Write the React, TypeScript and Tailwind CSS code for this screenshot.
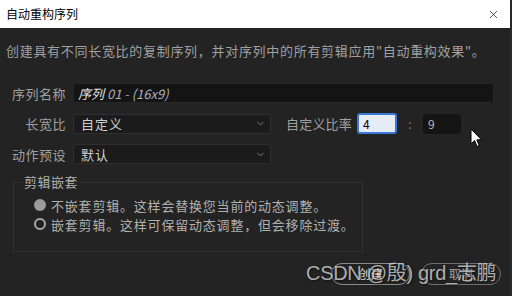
import { ChevronDown, X } from 'lucide-react'

const font = { fontFamily: '"Noto Sans CJK SC", "Noto Sans", sans-serif' }

const Select = ({ value }: { value: string }) => (
  <div className="w-[198px] h-[20px] bg-[#1b1b1b] border border-[#2f2f2f] rounded-[2px] flex items-center justify-between pl-[7px] pr-[4px]">
    <span className="text-[13px] leading-none tracking-[1px] text-[#cfcfcf]">{value}</span>
    <ChevronDown size={11} strokeWidth={1.6} className="text-[#9a9a9a]" />
  </div>
)

const Radio = ({ checked, label }: { checked: boolean; label: string }) => (
  <div className="flex items-center gap-[5px] h-[16px]">
    {checked ? (
      <span className="w-[12px] h-[12px] rounded-full bg-[#9c9c9c]" />
    ) : (
      <span className="w-[12px] h-[12px] rounded-full border-2 border-[#a8a8a8] bg-[#202020]" />
    )}
    <span className="text-[13px] leading-none tracking-[0.8px] text-[#b0b0b0]">{label}</span>
  </div>
)

const App = () => {
  return (
    <div className="w-[512px] h-[296px] overflow-hidden relative flex bg-[#2a2a2a]" style={font}>
      <div className="w-[510px] h-full flex flex-col bg-[#232323]">
        <div className="h-[28px] bg-white flex items-center justify-between pl-[6px] pr-[10px] shrink-0">
          <span className="text-[12px] text-black leading-none">自动重构序列</span>
          <X size={13} strokeWidth={1.2} className="text-black" />
        </div>

        <div className="flex flex-col pl-[6px]">
          <p className="mt-[16px] text-[13px] leading-[14px] tracking-[0.7px] text-[#a0a0a0] whitespace-nowrap">
            创建具有不同长宽比的复制序列，并对序列中的所有剪辑应用"自动重构效果"。
          </p>

          <div className="mt-[25px] flex flex-col gap-[10px]">
            <div className="flex items-center gap-[7px]">
              <span className="w-[60px] text-right text-[13px] leading-none tracking-[0.5px] text-[#a0a0a0]">序列名称</span>
              <div className="w-[421px] h-[20px] bg-[#141414] border border-[#262626] rounded-[2px] flex items-center pl-[4px] text-[13px] italic leading-none">
                <span className="text-[#e6e6e6]">序列</span>
                <span className="text-[#a9aec0]">&nbsp;01 - (16x9)</span>
              </div>
            </div>

            <div className="flex items-center gap-[7px]">
              <span className="w-[60px] text-right text-[13px] leading-none tracking-[0.5px] text-[#a0a0a0]">长宽比</span>
              <Select value="自定义" />
              <span className="ml-[8px] text-[13px] leading-none tracking-[0.2px] text-[#a0a0a0]">自定义比率</span>
              <div className="ml-[-2px] w-[40px] h-[21px] bg-[#e6ecf6] border-2 border-[#3a78d8] rounded-[3px] flex items-center pl-[4px] text-[12px] text-black">4</div>
              <span className="w-[12px] text-center text-[12px] text-[#7a7a7a]">:</span>
              <div className="w-[38px] h-[20px] bg-[#141414] rounded-[3px] flex items-center pl-[5px] text-[12px] text-[#b8b8b8]">9</div>
            </div>

            <div className="flex items-center gap-[7px]">
              <span className="w-[60px] text-right text-[13px] leading-none tracking-[0.5px] text-[#a0a0a0]">动作预设</span>
              <Select value="默认" />
            </div>
          </div>

          <fieldset className="mt-[11px] ml-[7px] w-[350px] h-[77px] border border-[#303030]">
            <legend className="ml-[9px] px-[1px] text-[13px] leading-[14px] tracking-[0.5px] text-[#b0b0b0]">剪辑嵌套</legend>
            <div className="flex flex-col gap-[3px] pl-[20px] pt-[8px]">
              <Radio checked label="不嵌套剪辑。这样会替换您当前的动态调整。" />
              <Radio checked={false} label="嵌套剪辑。这样可保留动态调整，但会移除过渡。" />
            </div>
          </fieldset>

          <div className="mt-[11px] flex justify-end gap-[11px] pr-[9px]">
            <button className="w-[79px] h-[22px] rounded-full border border-[#8c8c8c] text-[12px] text-[#e0e0e0]">创建</button>
            <button className="w-[80px] h-[22px] rounded-full border border-[#6e6e6e] text-[12px] text-[#a0a0a0]">取消</button>
          </div>
        </div>
      </div>

      <div
        className="absolute left-[306px] top-[263px] text-[20px] leading-none tracking-[-0.3px] text-[rgba(215,215,215,0.8)] whitespace-nowrap [text-shadow:1px_1px_2px_rgba(0,0,0,0.6)]"
        style={{ fontFamily: '"Liberation Sans", "Noto Sans CJK SC", sans-serif' }}
      >
        CSDN @殷) grd_志鹏
      </div>

      <svg className="absolute left-[470px] top-[128px]" width="14" height="21" viewBox="0 0 14 21">
        <path d="M1 1 L1 16 L4.5 12.5 L7 18.5 L9.2 17.6 L6.8 11.8 L11.5 11.8 Z" fill="white" stroke="black" strokeWidth="1" strokeLinejoin="round" />
      </svg>
    </div>
  )
}

export default App
